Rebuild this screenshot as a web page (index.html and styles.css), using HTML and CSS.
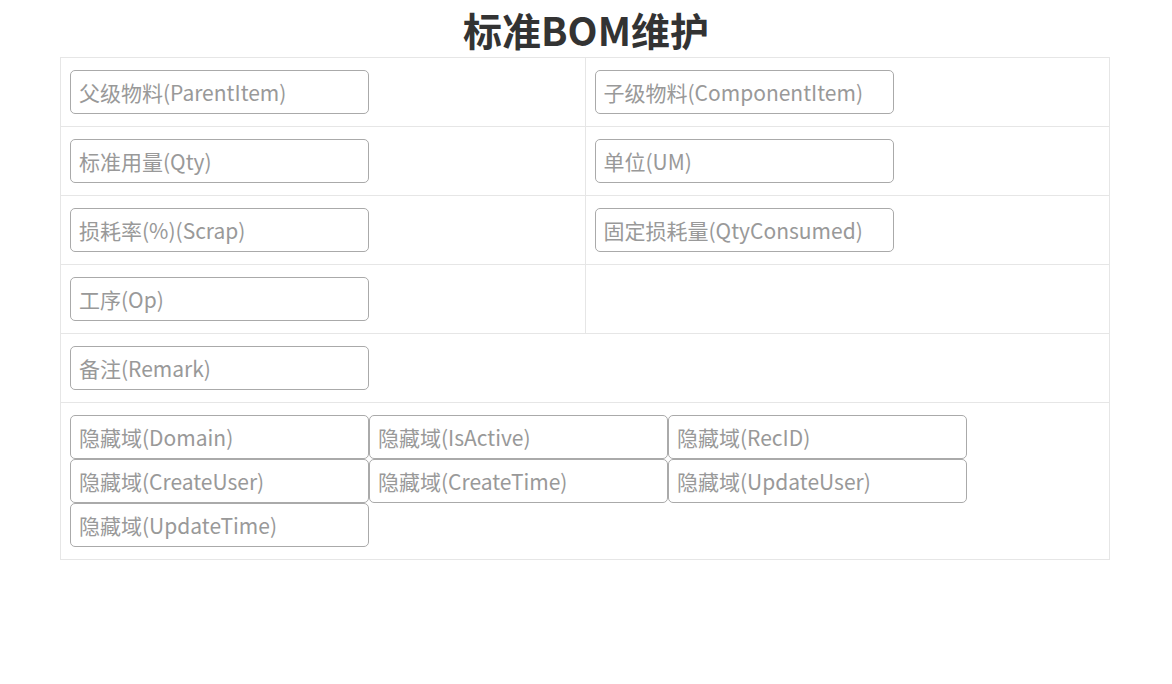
FILE: index.html
```html
<!DOCTYPE html>
<html lang="zh-CN">
<head>
<meta charset="utf-8">
<title>标准BOM维护</title>
<link rel="stylesheet" href="styles.css">
</head>
<body>
<h1 class="title">标准BOM维护</h1>
<div class="form">
  <div class="row">
    <div class="cell"><input class="field" placeholder="父级物料(ParentItem)"></div>
    <div class="cell"><input class="field" placeholder="子级物料(ComponentItem)"></div>
  </div>
  <div class="row">
    <div class="cell"><input class="field" placeholder="标准用量(Qty)"></div>
    <div class="cell"><input class="field" placeholder="单位(UM)"></div>
  </div>
  <div class="row">
    <div class="cell"><input class="field" placeholder="损耗率(%)(Scrap)"></div>
    <div class="cell"><input class="field" placeholder="固定损耗量(QtyConsumed)"></div>
  </div>
  <div class="row">
    <div class="cell"><input class="field" placeholder="工序(Op)"></div>
    <div class="cell"></div>
  </div>
  <div class="row">
    <div class="cell wide"><input class="field" placeholder="备注(Remark)"></div>
  </div>
  <div class="row last">
    <div class="cell wide hidden-group">
      <input class="field" placeholder="隐藏域(Domain)">
      <input class="field" placeholder="隐藏域(IsActive)">
      <input class="field" placeholder="隐藏域(RecID)">
      <input class="field" placeholder="隐藏域(CreateUser)">
      <input class="field" placeholder="隐藏域(CreateTime)">
      <input class="field" placeholder="隐藏域(UpdateUser)">
      <input class="field" placeholder="隐藏域(UpdateTime)">
    </div>
  </div>
</div>
</body>
</html>
```

FILE: styles.css
```css
* { box-sizing: border-box; }
html, body { margin: 0; padding: 0; background: #fff; }
body {
  font-family: "Noto Sans CJK SC", "Noto Sans", sans-serif;
  color: #333;
}
.title {
  margin: 0;
  height: 57px;
  padding-top: 4px;
  text-align: center;
  font-size: 39px;
  line-height: 50px;
  font-weight: 700;
  color: #333;
}
.form {
  width: 1050px;
  margin-left: 60px;
  border: 1px solid #e6e6e6;
  border-bottom: none;
}
.row {
  display: flex;
  border-bottom: 1px solid #e6e6e6;
}
.cell {
  flex: 1 1 0;
  min-height: 68px;
  padding: 12px 9px;
}
.cell + .cell { border-left: 1px solid #e6e6e6; }
.cell.wide { flex: 1 1 100%; }
.hidden-group {
  display: flex;
  flex-wrap: wrap;
  align-content: flex-start;
  padding-bottom: 12px;
}
.field {
  display: block;
  width: 299px;
  height: 44px;
  margin: 0;
  padding: 0 8px;
  border: 1px solid #aaa;
  border-radius: 5px;
  background: #fff;
  font-family: "Noto Sans CJK SC", "Noto Sans", sans-serif;
  font-size: 21px;
  color: #333;
  outline: none;
}
.field::placeholder { color: #999; opacity: 1; }
```
